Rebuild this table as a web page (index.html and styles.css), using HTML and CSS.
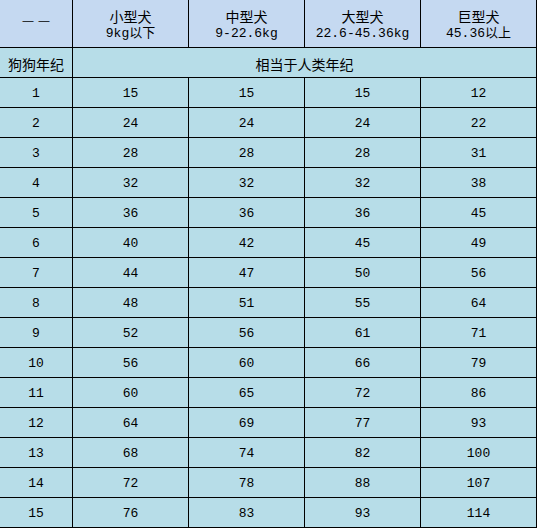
FILE: index.html
```html
<!DOCTYPE html>
<html lang="zh">
<head>
<meta charset="utf-8">
<link rel="stylesheet" href="styles.css">
</head>
<body>
<table class="age-table">
  <colgroup>
    <col class="c-first">
    <col class="c-col">
    <col class="c-col">
    <col class="c-col">
    <col class="c-col">
  </colgroup>
  <thead>
    <tr class="head-row">
      <th class="dash">——</th>
      <th><div class="t1">小型犬</div><div class="t2">9kg以下</div></th>
      <th><div class="t1">中型犬</div><div class="t2">9-22.6kg</div></th>
      <th><div class="t1">大型犬</div><div class="t2">22.6-45.36kg</div></th>
      <th><div class="t1">巨型犬</div><div class="t2">45.36以上</div></th>
    </tr>
  </thead>
  <tbody>
    <tr class="sub-row">
      <td class="cn">狗狗年纪</td>
      <td class="cn" colspan="4">相当于人类年纪</td>
    </tr>
    <tr><td>1</td><td>15</td><td>15</td><td>15</td><td>12</td></tr>
    <tr><td>2</td><td>24</td><td>24</td><td>24</td><td>22</td></tr>
    <tr><td>3</td><td>28</td><td>28</td><td>28</td><td>31</td></tr>
    <tr><td>4</td><td>32</td><td>32</td><td>32</td><td>38</td></tr>
    <tr><td>5</td><td>36</td><td>36</td><td>36</td><td>45</td></tr>
    <tr><td>6</td><td>40</td><td>42</td><td>45</td><td>49</td></tr>
    <tr><td>7</td><td>44</td><td>47</td><td>50</td><td>56</td></tr>
    <tr><td>8</td><td>48</td><td>51</td><td>55</td><td>64</td></tr>
    <tr><td>9</td><td>52</td><td>56</td><td>61</td><td>71</td></tr>
    <tr><td>10</td><td>56</td><td>60</td><td>66</td><td>79</td></tr>
    <tr><td>11</td><td>60</td><td>65</td><td>72</td><td>86</td></tr>
    <tr><td>12</td><td>64</td><td>69</td><td>77</td><td>93</td></tr>
    <tr><td>13</td><td>68</td><td>74</td><td>82</td><td>100</td></tr>
    <tr><td>14</td><td>72</td><td>78</td><td>88</td><td>107</td></tr>
    <tr><td>15</td><td>76</td><td>83</td><td>93</td><td>114</td></tr>
  </tbody>
</table>
</body>
</html>
```

FILE: styles.css
```css
html, body {
  margin: 0;
  padding: 0;
  background: #ffffff;
}
.age-table {
  margin: -1px 0 0 -1px;
  width: 538px;
  table-layout: fixed;
  border-collapse: collapse;
  font-family: "Liberation Mono", "Noto Sans CJK SC", monospace;
  font-size: 13px;
  color: #000;
}
.c-first { width: 73px; }
.c-col { width: 116px; }
.age-table th,
.age-table td {
  border: 1px solid #000;
  padding: 0;
  text-align: center;
  vertical-align: middle;
  font-weight: normal;
}
.age-table td {
  background: #b7dde8;
  height: 27px;
  line-height: 16px;
  padding-top: 2px;
}
.head-row th {
  background: #c5d9f1;
  height: 44px;
  padding-top: 3px;
}
.t1 {
  font-family: "Noto Sans CJK SC", sans-serif;
  font-size: 14px;
  line-height: 18px;
}
.t2 {
  font-size: 13px;
  line-height: 18px;
}
.head-row th.dash {
  font-family: "Liberation Sans", sans-serif;
  font-size: 11px;
  letter-spacing: 5px;
  text-indent: 5px;
  height: 40px;
  padding: 0 0 7px 0;
}
.cn {
  font-family: "Noto Sans CJK SC", sans-serif;
  font-size: 14px;
}
```
